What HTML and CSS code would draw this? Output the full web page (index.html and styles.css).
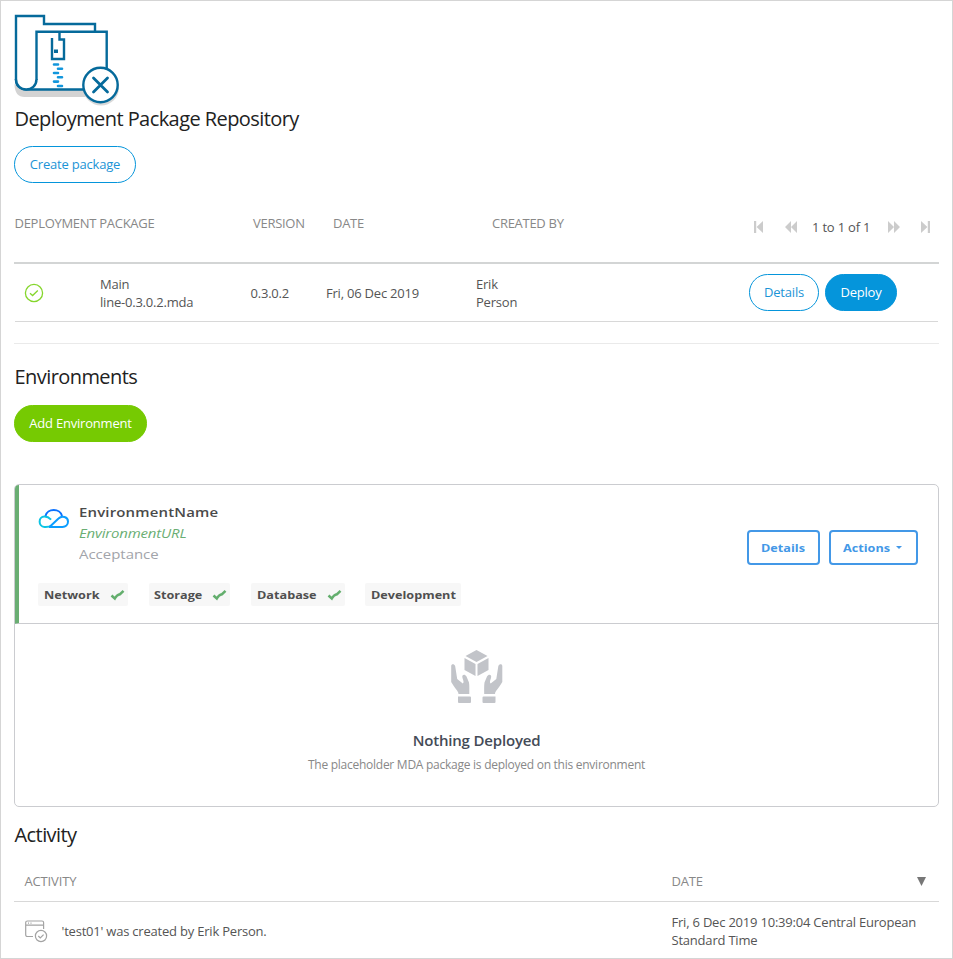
FILE: index.html
```html
<!DOCTYPE html>
<html lang="en">
<head>
<meta charset="utf-8">
<title>Deployment Package Repository</title>
<link rel="stylesheet" href="styles.css">
</head>
<body>
<main class="page">
  <svg class="logo" viewBox="14 13 108 94" width="108" height="94" fill="none">
    <path d="M14.500 84c0 9 4 13 10 13h64l-4-9H22z" fill="#d3d3d3"/>
    <circle cx="101" cy="87.500" r="18" fill="#d9d9d9"/>
    <g stroke="#056a9b" stroke-width="2.400">
      <path d="M16 80V16h28v8h51v7.500" fill="#fff"/>
      <path d="M36.500 80V31.700h70.200V89.500H26c-6 0-10-4-10-10" fill="#fff"/>
      <path d="M16 79c0 14 20.500 14 20.500 0" fill="#fff"/>
      <path d="M52 38v21h12V39.500h-4.500V32" />
      <circle cx="100.500" cy="85" r="17.200" fill="#fff"/>
      <path d="M93.500 78l14 14m0-14l-14 14" stroke-width="2.800" stroke-linecap="round"/>
    </g>
    <path d="M54 49.500h4v3.500h-4z" fill="#056a9b"/>
    <path d="M54 64.500h4m0 4.300h4m-8 4.200h4m0 4.300h4m-8 4.300h4m0 4.400h4" stroke="#1296dc" stroke-width="2.600" stroke-linecap="round"/>
  </svg>
  <h2 class="title repo">Deployment Package Repository</h2>
  <button class="pill create">Create package</button>

  <div class="pkg-head">
    <span>DEPLOYMENT PACKAGE</span><span>VERSION</span><span>DATE</span><span>CREATED BY</span>
    <div class="pager">
      <svg width="9" height="12" viewBox="0 0 9 12"><path d="M0 0h2.200v12H0zM9 0v12L2.600 6z"/></svg>
      <svg width="12" height="12" viewBox="0 0 12 12"><path d="M6 0v12L0 6zM12 0v12L6 6z"/></svg>
      <span class="count">1 to 1 of 1</span>
      <svg width="12" height="12" viewBox="0 0 12 12"><path d="M0 0v12l6-6zM6 0v12l6-6z"/></svg>
      <svg width="9" height="12" viewBox="0 0 9 12"><path d="M6.800 0H9v12H6.800zM0 0v12l6.400-6z"/></svg>
    </div>
  </div>
  <div class="pkg-row">
    <svg class="ok" width="20" height="20" viewBox="0 0 20 20" fill="none" stroke="#85d62c" stroke-width="1.300"><circle cx="10" cy="10" r="8.600"/><path d="M6 10.200l2.600 2.300 5.200-5"/></svg>
    <span>Main<br>line-0.3.0.2.mda</span>
    <span>0.3.0.2</span>
    <span>Fri, 06 Dec 2019</span>
    <span>Erik<br>Person</span>
    <div class="acts"><button class="pill det">Details</button><button class="pill solid">Deploy</button></div>
  </div>
  <hr class="rule">

  <h2 class="title env-title">Environments</h2>
  <button class="pill green">Add Environment</button>

  <section class="card">
    <div class="env">
      <div class="env-main">
        <div class="env-id">
          <svg class="cloud" width="32" height="20" viewBox="0 0 32 20" fill="none" stroke-width="2">
            <path d="M7.500 7C9 -1 22.500 -1 24 7" stroke="#0b72ff"/>
            <path d="M14 16.500C11 18.200 8 17.900 6.500 17.900 0 17.500 0 7.700 6.500 7.600c3.500 0 5 1.400 6.600 3" stroke="#0cc4e4"/>
            <path d="M11.500 17.900L20.500 9.500C24 6 30 8 30 12.500c0 3.500-2.500 5.400-5.500 5.400H11" stroke="#0b9dff"/>
          </svg>
          <div>
            <div class="name wide">EnvironmentName</div>
            <div class="url wide">EnvironmentURL</div>
            <div class="mode wide">Acceptance</div>
          </div>
        </div>
        <div class="tags">
          <span class="tag t1"><span class="wide">Network</span> <svg width="15" height="12" viewBox="0 0 15 12"><path d="M1.500 6.500l3.300 3Q7 5.500 10 5.200L13.500 1.800" fill="none" stroke="#63ae6d" stroke-width="2.500"/></svg></span>
          <span class="tag t2"><span class="wide">Storage</span> <svg width="15" height="12" viewBox="0 0 15 12"><path d="M1.500 6.500l3.300 3Q7 5.500 10 5.200L13.500 1.800" fill="none" stroke="#63ae6d" stroke-width="2.500"/></svg></span>
          <span class="tag t3"><span class="wide">Database</span> <svg width="15" height="12" viewBox="0 0 15 12"><path d="M1.500 6.500l3.300 3Q7 5.500 10 5.200L13.500 1.800" fill="none" stroke="#63ae6d" stroke-width="2.500"/></svg></span>
          <span class="tag t4"><span class="wide">Development</span></span>
        </div>
      </div>
      <div class="env-acts"><button class="box b1"><span class="wide">Details</span></button><button class="box b2"><span class="wide">Actions</span><i class="caret"></i></button></div>
    </div>
    <div class="empty">
      <svg width="52" height="54" viewBox="0 0 52 54" fill="#c2c4c9">
        <path d="M25.500 0L36.500 6 25.500 12 14.500 6zM13.500 8L24.500 14v12L13.500 20zM37.500 8v12L26.500 26V14z"/>
        <path id="hand" d="M.2 16c0-2 3-2.400 4 .2L6.200 29l5.600 4.500c1.200-1 .8-2.500-.3-5.500-1-3 2-4.500 4-1.500l2.500 6c.5 3 .3 7 .3 11.500H7.500c0-3-4-6-7.300-12zM7 46.500h12q1 0 1 1v4.500q0 1-1 1H8q-1 0-1-1z"/>
        <use href="#hand" transform="matrix(-1 0 0 1 51.500 0)"/>
      </svg>
      <h3 class="nd">Nothing Deployed</h3>
      <p class="note">The placeholder MDA package is deployed on this environment</p>
    </div>
  </section>

  <h2 class="title act-title">Activity</h2>
  <div class="act-head"><span class="a">ACTIVITY</span><span class="d">DATE</span><i class="sort"></i></div>
  <div class="act-row">
    <svg width="23" height="23" viewBox="0 0 23 23" fill="none" stroke="#a3a3a3" stroke-width="1.200">
      <path d="M8 16.500H2.500q-1.800 0-1.800-1.800V2.500Q.7 1 2.500 1H17q1.600 0 1.600 1.500V9M.7 5.200h17.900M3 3.100h1m1.500 0h1"/>
      <circle cx="16" cy="16" r="5.600"/><path d="M13.300 16l2 2 3.300-3.400"/>
    </svg>
    <span class="msg">'test01' was created by Erik Person.</span>
    <span class="when">Fri, 6 Dec 2019 10:39:04 Central European<br>Standard Time</span>
  </div>
</main>
</body>
</html>
```
FILE: styles.css
```css
* { box-sizing: border-box; }
body { margin: 0; background: #fff; font: 13px/18px "Open Sans", sans-serif; letter-spacing: -.21px; color: #555; }
.page { height: 959px; border: 1px solid #d5d5d5; padding: 12px 13px 0; overflow: hidden; }
.logo { display: block; }
.title { margin: 0; font-size: 20px; line-height: 28px; font-weight: 400; letter-spacing: -.57px; color: #222; white-space: nowrap; padding-left: .5px; }
.repo { margin-top: -3px; padding-top: 1px; height: 28px; }
button { font-family: inherit; padding: 0; white-space: nowrap; }
.pill { display: block; height: 37px; border: 1px solid #0595db; border-radius: 19px; background: #fff; color: #1b94d6; font-size: 13px; line-height: 18px; letter-spacing: -.2px; padding-bottom: 1px; }
.create { width: 122px; margin-top: 14px; }
.pkg-head { height: 81px; border-bottom: 2px solid #d3d5d5; display: grid; grid-template-columns: 238.500px 80px 159px 262px 1fr; padding: 31px 0 0 .5px; color: #888; letter-spacing: -.28px; white-space: nowrap; }
.pager { display: flex; align-items: center; height: 26px; color: #555; letter-spacing: -.2px; }
.pager svg { fill: #ccc; flex: none; }
.pager svg:nth-child(2) { margin-left: 22px; }
.count { margin: 0 18px 0 15px; width: 58px; }
.pager svg:last-child { margin-left: 21px; }
.pkg-row { height: 58px; margin: 0 1px; border-bottom: 1px solid #d8d8d8; display: grid; grid-template-columns: 85px 150.500px 75.500px 150px 273px 1fr; align-items: center; white-space: nowrap; }
.ok { margin-left: 9px; }
.acts { display: flex; gap: 6px; }
.det { width: 70px; }
.solid { width: 72px; background: #0595db; color: #fff; }
.rule { margin: 21px 0 0; border: 0; border-top: 1px solid #eaeaea; }
.env-title { margin-top: 19px; }
.green { width: 133px; margin-top: 14px; background: #76ca02; border-color: #76ca02; color: #fff; }
.card { margin-top: 42px; height: 323px; border: 1px solid #cbccd0; border-radius: 5px; overflow: hidden; }
.env { height: 139px; margin-left: -1px; border-left: 5px solid #6aae73; border-bottom: 1px solid #cbccd0; display: flex; justify-content: space-between; }
.env-main { padding: 17px 0 0 19px; }
.env-id { display: flex; }
.env-id > div { margin-left: 9px; }
.cloud { margin-top: 7px; }
.wide { transform: scaleX(1.15); transform-origin: left; letter-spacing: 0; }
.name { font-weight: 600; color: #4a4a4a; line-height: 21px; letter-spacing: .15px; }
.url { font-style: italic; color: #6aae73; line-height: 21px; letter-spacing: -.15px; }
.mode { color: #a2a4aa; line-height: 21px; margin-bottom: 1px; }
.tags { display: flex; margin-top: 17px; gap: 21px; }
.tag { height: 23px; border-radius: 2px; background: #f7f7f7; color: #4f4f4f; font-size: 11px; font-weight: 700; line-height: 23px; padding: 0 3px 0 6px; display: flex; align-items: center; justify-content: space-between; white-space: nowrap; }
.t1 { width: 90px; } .t2 { width: 81px; padding-left: 5px; } .t3 { width: 94px; } .t4 { width: 96px; margin-left: -1px; }
.env-acts { display: flex; gap: 9px; padding: 45px 20px 0 0; }
.box { display: flex; align-items: center; height: 35px; background: #fff; border: 2px solid #4398e7; border-radius: 4px; color: #4398e7; font-size: 11px; font-weight: 700; padding-left: 12px; }
.b1 { width: 73px; } .b2 { width: 89px; }
.caret { border: 3.500px solid transparent; border-top-color: #4398e7; border-bottom: 0; margin-left: 12px; }
.empty { display: flex; flex-direction: column; align-items: center; padding-top: 26px; }
.nd { margin: 25px 0 0; font-size: 15px; line-height: 22px; font-weight: 600; letter-spacing: -.18px; color: #444b57; white-space: nowrap; }
.note { margin: 5px 0 0; font-size: 12px; letter-spacing: -.26px; color: #888; white-space: nowrap; }
.act-title { margin-top: 14px; }
.act-head { height: 53px; padding: 23px 13px 0 10.500px; border-bottom: 1px solid #d8d8d8; display: flex; color: #888; letter-spacing: -.15px; }
.a { width: 647px; }
.sort { margin: 5px 0 0 auto; width: 9px; height: 9px; background: #777; clip-path: polygon(0 0, 100% 0, 50% 100%); }
.act-row { display: flex; padding: 11px 0 0 10.500px; white-space: nowrap; }
.act-row svg { margin-top: 7px; }
.msg { margin: 9px 0 0 14px; width: 610px; }
```
